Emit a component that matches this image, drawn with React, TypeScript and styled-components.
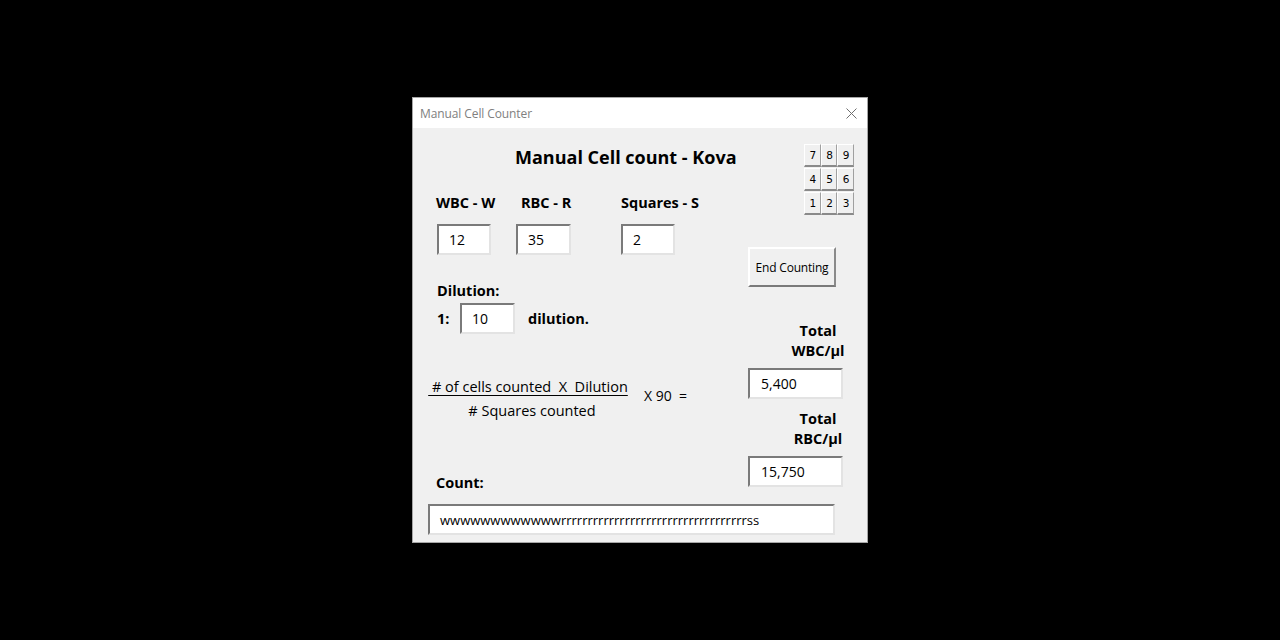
import React from "react";
import styled, { createGlobalStyle } from "styled-components";

const GlobalStyle = createGlobalStyle`
  html, body { margin: 0; padding: 0; background: #000; }
  body { width: 1280px; height: 640px; overflow: hidden; font-family: "Open Sans", "Noto Sans", sans-serif; }
  * { box-sizing: border-box; }
`;

const Page = styled.div`
  width: 1280px;
  height: 640px;
  display: flex;
  align-items: flex-start;
  justify-content: center;
  padding-top: 97px;
  background: #000;
`;

const Window = styled.div`
  width: 456px;
  height: 446px;
  border: 1px solid #a6a6a6;
  display: flex;
  flex-direction: column;
  background: #f0f0f0;
`;

const TitleBar = styled.div`
  height: 30px;
  flex: none;
  background: #fff;
  display: flex;
  align-items: center;
  justify-content: space-between;
  padding: 0 10px 0 7px;
`;

const TitleText = styled.span`
  font-size: 12px;
  color: #808080;
  letter-spacing: -0.1px;
`;

const Body = styled.div`
  flex: 1;
  display: flex;
  flex-direction: column;
  padding: 0 0 0 15px;
  color: #000;
`;

const TopSection = styled.div`
  display: flex;
`;

const LeftCol = styled.div`
  width: 320px;
  display: flex;
  flex-direction: column;
`;

const RightCol = styled.div`
  display: flex;
  flex-direction: column;
  padding-top: 16px;
`;

const Heading = styled.h1`
  margin: 17px 0 0 87px;
  font-size: 18px;
  line-height: 24px;
  font-weight: 700;
  white-space: nowrap;
`;

const FieldGrid = styled.div`
  margin: 24px 0 0 8px;
  display: grid;
  grid-template-columns: 80px 105px 80px;
  row-gap: 11px;
`;

const Label = styled.div<{ $indent?: number }>`
  font-size: 14.5px;
  font-weight: 700;
  line-height: 20px;
  white-space: nowrap;
  padding-left: ${(p) => p.$indent ?? 0}px;
`;

const Field = styled.div<{ $w: number; $pad?: number; $size?: number }>`
  width: ${(p) => p.$w}px;
  height: 31px;
  margin-left: ${(p) => p.$pad ?? 0}px;
  background: #fff;
  border-top: 2px solid #7a7a7a;
  border-left: 2px solid #7a7a7a;
  border-right: 2px solid #e3e3e3;
  border-bottom: 2px solid #e3e3e3;
  display: flex;
  align-items: center;
  padding-left: 10px;
  font-size: ${(p) => p.$size ?? 14}px;
  white-space: nowrap;
  overflow: hidden;
`;

const DilutionLabel = styled(Label)`
  margin: 26px 0 0 9px;
`;

const DilutionRow = styled.div`
  margin: 2px 0 0 9px;
  display: flex;
  align-items: center;
`;

const RatioLabel = styled(Label)`
  width: 23px;
`;

const AfterLabel = styled(Label)`
  margin-left: 13px;
`;

const FormulaRow = styled.div`
  margin-top: 43px;
  display: flex;
  align-items: center;
`;

const Fraction = styled.div`
  width: 200px;
  display: flex;
  flex-direction: column;
  align-items: center;
  font-size: 14.5px;
  line-height: 20px;
`;

const Numerator = styled.span`
  white-space: pre;
  text-decoration: underline;
  text-underline-offset: 3px;
`;

const Denominator = styled.span`
  white-space: pre;
  padding-left: 8px;
  margin-top: 4px;
`;

const Multiplier = styled.span`
  margin-left: 16px;
  margin-top: -8px;
  font-size: 14px;
  white-space: pre;
`;

const CountLabel = styled(Label)`
  margin: 52px 0 0 8px;
`;

const Keypad = styled.div`
  margin-left: 56px;
  display: flex;
  flex-direction: column;
  gap: 1px;
`;

const KeyRow = styled.div`
  display: flex;
  width: 50px;
`;

const Key = styled.button`
  width: 16.7px;
  height: 23px;
  padding: 0 0 0 1px;
  margin: 0;
  font-family: "DejaVu Sans", sans-serif;
  font-size: 10.5px;
  color: #000;
  background: #f0f0f0;
  border-top: 1px solid #fff;
  border-left: 1px solid #fff;
  border-right: 1px solid #a0a0a0;
  border-bottom: 2px solid #8a8a8a;
  display: flex;
  align-items: center;
  justify-content: center;
`;

const RaisedButton = styled.button`
  margin-top: 32px;
  width: 88px;
  height: 40px;
  padding: 0;
  font-family: "Open Sans", sans-serif;
  font-size: 12px;
  letter-spacing: -0.2px;
  color: #000;
  background: #f0f0f0;
  border-top: 2px solid #fff;
  border-left: 2px solid #fff;
  border-right: 2px solid #8a8a8a;
  border-bottom: 2px solid #7a7a7a;
`;

const TotalLabel = styled.div<{ $top: number }>`
  margin: ${(p) => p.$top}px 0 0 30px;
  width: 80px;
  text-align: center;
  font-size: 14.5px;
  font-weight: 700;
  line-height: 20px;
`;

const ResultField = styled(Field)`
  margin-top: 7px;
  padding-left: 11px;
`;

const CountField = styled(Field)`
  margin-top: 11px;
`;

const CloseIcon = () => (
  <svg width="11" height="11" viewBox="0 0 11 11">
    <path d="M0.5 0.5 L10.5 10.5 M10.5 0.5 L0.5 10.5" stroke="#6e6e6e" strokeWidth="1" fill="none" />
  </svg>
);

const keyRows = [
  ["7", "8", "9"],
  ["4", "5", "6"],
  ["1", "2", "3"],
];

const countText = "w".repeat(12) + "r".repeat(35) + "ss";

export default function App() {
  return (
    <>
      <GlobalStyle />
      <Page>
        <Window>
          <TitleBar>
            <TitleText>Manual Cell Counter</TitleText>
            <CloseIcon />
          </TitleBar>
          <Body>
            <TopSection>
              <LeftCol>
                <Heading>Manual Cell count - Kova</Heading>
                <FieldGrid>
                  <Label>WBC - W</Label>
                  <Label $indent={5}>RBC - R</Label>
                  <Label>Squares - S</Label>
                  <Field $w={54} $pad={1}>12</Field>
                  <Field $w={55}>35</Field>
                  <Field $w={54}>2</Field>
                </FieldGrid>
                <DilutionLabel>Dilution:</DilutionLabel>
                <DilutionRow>
                  <RatioLabel>1:</RatioLabel>
                  <Field $w={55}>10</Field>
                  <AfterLabel>dilution.</AfterLabel>
                </DilutionRow>
                <FormulaRow>
                  <Fraction>
                    <Numerator> # of cells counted  X  Dilution</Numerator>
                    <Denominator># Squares counted</Denominator>
                  </Fraction>
                  <Multiplier>X 90  =</Multiplier>
                </FormulaRow>
                <CountLabel>Count:</CountLabel>
              </LeftCol>
              <RightCol>
                <Keypad>
                  {keyRows.map((row) => (
                    <KeyRow key={row.join("")}>
                      {row.map((k) => (
                        <Key key={k}>{k}</Key>
                      ))}
                    </KeyRow>
                  ))}
                </Keypad>
                <RaisedButton>End Counting</RaisedButton>
                <TotalLabel $top={34}>
                  Total
                  <br />
                  WBC/µl
                </TotalLabel>
                <ResultField $w={95}>5,400</ResultField>
                <TotalLabel $top={10}>
                  Total
                  <br />
                  RBC/µl
                </TotalLabel>
                <ResultField $w={95}>15,750</ResultField>
              </RightCol>
            </TopSection>
            <CountField $w={407} $size={13}>{countText}</CountField>
          </Body>
        </Window>
      </Page>
    </>
  );
}
